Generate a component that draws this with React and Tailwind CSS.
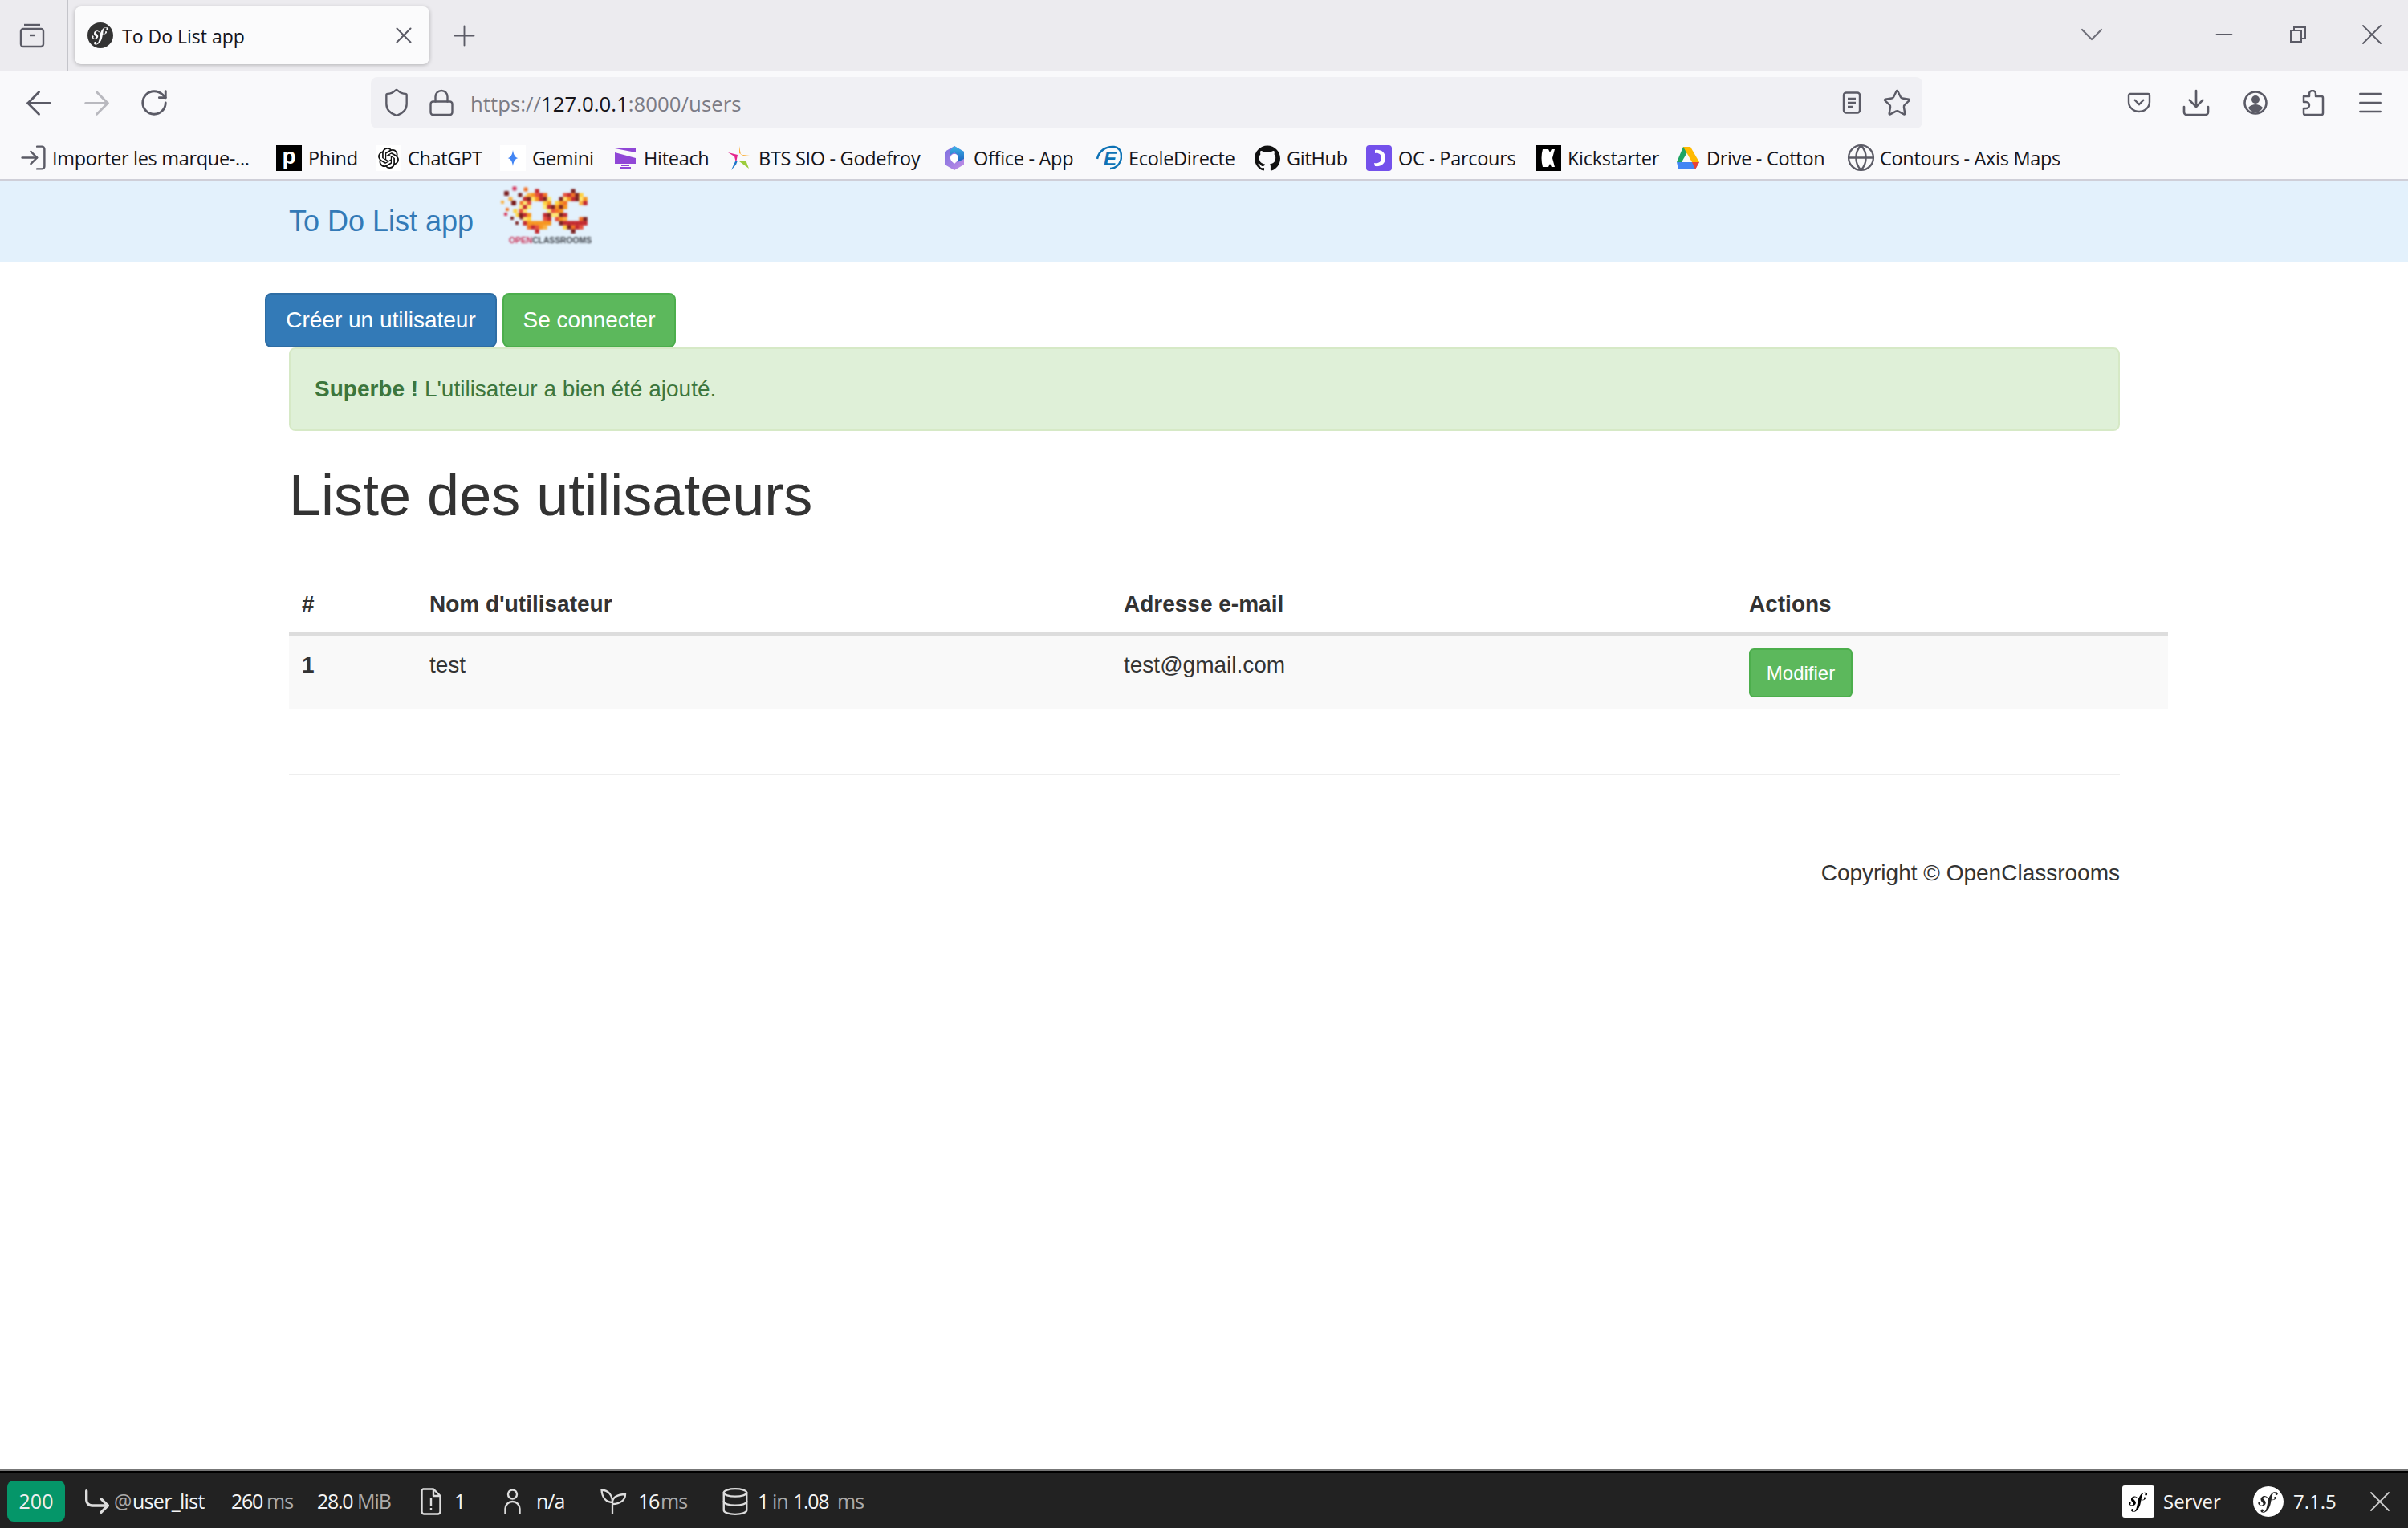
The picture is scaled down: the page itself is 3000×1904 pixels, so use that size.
import React from 'react';
import { SiSymfony, SiGithub, SiOpenai } from 'react-icons/si';
import { LogIn, Globe, X, Plus, ArrowLeft, ArrowRight, RotateCw, Shield, Lock, Star, Download, Menu, ChevronDown, Minus, Database, CornerDownRight } from 'lucide-react';

const GRAY = '#5b5b66';

function Logo() {
  const palette = ['#f7941d', '#ffd23f', '#c2272d', '#fbb040', '#7a1f1f', '#e8503a', '#ffe873', '#f36f21'];
  const cells = [];
  const size = 5;
  const ring = (cx, cy, rx, ry, hx, hy, cut, seed) => {
    for (let i = -6; i <= 6; i++) {
      for (let j = -6; j <= 6; j++) {
        const x = cx + i * size;
        const y = cy + j * size;
        const outer = ((x - cx) / rx) ** 2 + ((y - cy) / ry) ** 2;
        const inner = ((x - cx) / hx) ** 2 + ((y - cy) / hy) ** 2;
        if (outer > 1 || inner < 1) continue;
        if (cut && x > cx + 4 && Math.abs(y - cy) < (x - cx) * 0.55) continue;
        const c = palette[(Math.abs(i * 7 + j * 13 + i * j * 3) + seed) % palette.length];
        cells.push(<rect key={`${seed}-${i}-${j}`} x={x - size / 2} y={y - size / 2} width={size + 0.3} height={size + 0.3} fill={c} />);
      }
    }
  };
  ring(44, 30, 21, 25, 11, 12, false, 1);
  ring(89, 30, 23, 25, 11, 12, true, 3);
  const dots = [[6, 8, 6, '#7a1f1f'], [16, 2, 5, '#d6335a'], [30, 3, 5, '#f36f21'], [23, 10, 5, '#7a1f1f'], [31, 13, 5, '#ffd23f'], [1, 19, 4, '#fbb040'], [11, 15, 5, '#fbb040'], [15, 20, 6, '#7a1f1f'], [25, 20, 5, '#f36f21'], [7, 28, 4, '#f36f21'], [17, 30, 5, '#ffd23f'], [28, 27, 5, '#7a1f1f'], [20, 35, 5, '#ffd23f'], [5, 34, 4, '#d6335a'], [13, 39, 4, '#7a1f1f'], [25, 38, 5, '#7a1f1f'], [19, 45, 4, '#7a1f1f']];
  return (
    <svg viewBox="0 0 113 72" className="ml-[35px] mt-[-15px] h-[72px] w-[113px] overflow-visible blur-[0.9px]">
      {dots.map(([x, y, s, c], i) => <rect key={i} x={x - s / 2} y={y - s / 2} width={s} height={s} rx="1" fill={c} />)}
      {cells}
      <text x="9" y="70" fontSize="10" fontWeight="700" textLength="103" lengthAdjust="spacingAndGlyphs" fontFamily="'Liberation Sans', sans-serif">
        <tspan fill="#c9294f">OPEN</tspan><tspan fill="#3a3f46">CLASSROOMS</tspan>
      </text>
    </svg>
  );
}

function SfSquare() {
  return (
    <span className="relative flex h-[40px] w-[40px] shrink-0 items-center justify-center rounded-[3px] bg-white">
      <span className="absolute h-[30px] w-[30px] rounded-full bg-black" />
      <SiSymfony className="relative h-[36px] w-[36px] text-white" />
    </span>
  );
}

const Ico = ({ children, className = 'w-[30px]' }) => (
  <span className={`flex shrink-0 items-center justify-center [&>svg]:shrink-0 ${className}`}>{children}</span>
);

const bookmarks = [
  { t: 'Importer les marque-...', w: 'w-[241px] mr-[13px]', i: <LogIn size={37} color={GRAY} strokeWidth={1.6} className="shrink-0" /> },
  { t: 'Phind', w: 'w-[59px]', i: <span className="flex h-[32px] w-[32px] justify-center bg-black font-['Liberation_Sans'] text-[28px] font-bold leading-[27px] text-white">p</span> },
  { t: 'ChatGPT', w: 'w-[90px]', i: <span className="flex h-[32px] w-[32px] items-center justify-center bg-white"><SiOpenai size={26} color="#111" /></span> },
  { t: 'Gemini', w: 'w-[74px]', i: <span className="flex h-[32px] w-[32px] items-center justify-center bg-white"><svg viewBox="0 0 24 24" className="h-[22px] w-[22px]"><path d="M12 1c1 7 3 10 7 11-4 1-6 4-7 11-1-7-3-10-7-11 4-1 6-4 7-11z" fill="#4285f4" /></svg></span> },
  { t: 'Hiteach', w: 'w-[78px]', i: <svg viewBox="0 0 32 32" className="h-[32px] w-[32px]"><path d="M4 4l26 0v5L4 4z" fill="#9047d6" /><path d="M4 9l26 7v7H4z" fill="#9047d6" /><rect x="12" y="24" width="10" height="2" fill="#9047d6" /><rect x="10" y="27" width="14" height="2.5" fill="#9047d6" /></svg> },
  { t: 'BTS SIO - Godefroy', w: 'w-[203px]', i: <svg viewBox="0 0 32 32" className="h-[32px] w-[32px]"><path d="M16 1l2 11h11l-8 1-5-3z" fill="#fbb13c" /><path d="M2 9l12 3-2 10-2-8z" fill="#e5258c" /><path d="M6 31l5-11 3-1-2 5z" fill="#1f77c9" /><path d="M16 20l12 9-3-8-2-2z" fill="#9ccc3c" /></svg> },
  { t: 'Office - App', w: 'w-[128px]', i: <svg viewBox="0 0 32 32" className="h-[32px] w-[32px]"><defs><linearGradient id="of1" x1="0" y1="0" x2="1" y2="1"><stop offset="0" stopColor="#7b6fe0" /><stop offset="1" stopColor="#c28ee6" /></linearGradient><linearGradient id="of2" x1="0" y1="0" x2="0" y2="1"><stop offset="0" stopColor="#3fb7e8" /><stop offset="1" stopColor="#1c5fbf" /></linearGradient></defs><path d="M16 1l12 7v16l-12 7-12-7V8z" fill="url(#of1)" /><path d="M16 1l12 7v9l-8 4-2-5 3-3-5-4-5 3v-6z" fill="url(#of2)" /><path d="M16 11c3 0 5 2 5 5s-3 5-5 7c-2-2-5-4-5-7s2-5 5-5z" fill="#fff" /></svg> },
  { t: 'EcoleDirecte', w: 'w-[132px]', i: <svg viewBox="0 0 32 32" className="h-[32px] w-[32px]"><path d="M1 17C3 7 12 1 22 2c7 1 9 6 9 12 0 8-6 15-14 15" fill="none" stroke="#0d72b5" strokeWidth="2.5" /><text x="9" y="25" fontSize="24" fontWeight="700" fontStyle="italic" fill="#0d72b5" fontFamily="'Liberation Sans', sans-serif">E</text></svg> },
  { t: 'GitHub', w: 'w-[74px]', i: <SiGithub size={32} color="#111" /> },
  { t: 'OC - Parcours', w: 'w-[146px]', i: <span className="flex h-[32px] w-[32px] items-center justify-center rounded-[4px] bg-[#7451eb]"><svg viewBox="0 0 32 32" className="h-[32px] w-[32px]"><path d="M11 6c8-1 13 3 13 10s-6 11-13 10l-1-4c5 1 9-1 9-6s-4-7-8-6z" fill="#fff" /></svg></span> },
  { t: 'Kickstarter', w: 'w-[108px]', i: <span className="flex h-[32px] w-[32px] items-center justify-center bg-black"><svg viewBox="0 0 32 32" className="h-[32px] w-[32px]"><path d="M9 5h7l2 4 2-4h4l-3 11 3 11h-4l-2-4-2 4H9c-2-7-2-15 0-22z" fill="#fff" /></svg></span> },
  { t: 'Drive - Cotton', w: 'w-[151px]', i: <svg viewBox="0 0 32 32" className="h-[32px] w-[32px]"><path d="M11 2h9L9 21 3 21z" fill="#1fa463" /><path d="M11 2h9l11 19h-9z" fill="#ffba00" /><path d="M9 21h22l-5 9H5l-2-9z" fill="#4285f4" /><path d="M22 21h9l-5 9z" fill="#ea4335" /></svg> },
  { t: 'Contours - Axis Maps', w: 'w-[228px]', i: <Globe size={37} color={GRAY} strokeWidth={1.5} className="shrink-0" /> },
];

function TabBar() {
  return (
    <div className="flex h-[88px] items-stretch bg-[#ecebef]">
      <div className="flex w-[85px] items-center border-r-2 border-[#c4c4ca] pl-[24px]">
        <svg viewBox="0 0 32 32" className="h-[32px] w-[32px]" fill="none" stroke={GRAY} strokeWidth="2.4"><path d="M6 3h20" /><rect x="2" y="8" width="28" height="22" rx="3" /><path d="M13 16h6" /></svg>
      </div>
      <div className="ml-[8px] mt-[8px] flex h-[72px] w-[442px] items-center rounded-[8px] bg-[#fbfbfc] pl-[16px] shadow-[0_1px_5px_rgba(0,0,0,0.25)]">
        <SiSymfony className="h-[32px] w-[32px] text-[#333]" />
        <span className="ml-[11px] w-[336px] whitespace-nowrap pt-[2px] text-[23px] text-[#15141a]">To Do List app</span>
        <Ico><X size={34} color={GRAY} strokeWidth={1.4} /></Ico>
      </div>
      <div className="ml-[28px] flex items-center"><Ico><Plus size={41} color={GRAY} strokeWidth={1.1} /></Ico></div>
      <div className="ml-auto flex items-center pb-[2px] pr-[30px]">
        <Ico><ChevronDown size={48} color="#70707a" strokeWidth={1.1} /></Ico>
        <Ico className="ml-[135px] w-[30px]"><Minus size={32} color={GRAY} strokeWidth={1.6} /></Ico>
        <Ico className="ml-[62px] w-[30px]"><svg viewBox="0 0 20 20" className="h-[20px] w-[20px]" fill="none" stroke={GRAY} strokeWidth="2"><rect x="1" y="5" width="13" height="14" /><path d="M5 5V1h14v14h-5" /></svg></Ico>
        <Ico className="ml-[62px] w-[30px]"><X size={44} color={GRAY} strokeWidth={1} /></Ico>
      </div>
    </div>
  );
}

function Toolbar() {
  return (
    <div className="flex h-[72px] items-start bg-[#f9f9fb]">
      <div className="flex h-[72px] items-center gap-[42px] pl-[33px] pr-[255px] pt-[8px]">
        <Ico><ArrowLeft size={47} color={GRAY} strokeWidth={1.5} /></Ico>
        <Ico><ArrowRight size={47} color="#b9b9bf" strokeWidth={1.5} /></Ico>
        <Ico><RotateCw size={38} color={GRAY} strokeWidth={1.8} /></Ico>
      </div>
      <div className="mt-[8px] flex h-[64px] w-[1933px] items-center rounded-[8px] bg-[#f0f0f4] pl-[17px] pr-[17px]">
        <Ico><Shield size={38} color={GRAY} strokeWidth={1.5} /></Ico>
        <Ico className="ml-[26px] w-[30px]"><Lock size={36} color={GRAY} strokeWidth={1.6} /></Ico>
        <span className="ml-[21px] flex-1 whitespace-nowrap pt-[2px] text-[25.8px] text-[#7b7b85]">https://<span className="text-[#15141a]">127.0.0.1</span>:8000/users</span>
        <Ico><svg viewBox="0 0 24 28" className="h-[28px] w-[24px]" fill="none" stroke={GRAY} strokeWidth="2.4"><rect x="2" y="1.5" width="20" height="25" rx="3" /><path d="M7 9h10M7 14h10M7 19h6" /></svg></Ico>
        <Ico className="ml-[26px] w-[30px]"><Star size={37} color={GRAY} strokeWidth={1.6} /></Ico>
      </div>
      <div className="flex h-[72px] flex-1 items-center pl-[255px] pt-[8px]">
        <Ico><svg viewBox="0 0 30 26" className="h-[26px] w-[30px]" fill="none" stroke={GRAY} strokeWidth="2.4"><path d="M2 4a2 2 0 0 1 2-2h22a2 2 0 0 1 2 2v8a13 12 0 0 1-26 0z" /><path d="M9 9l6 6 6-6" /></svg></Ico>
        <Ico className="ml-[41px] w-[30px]"><Download size={40} color={GRAY} strokeWidth={1.6} /></Ico>
        <Ico className="ml-[44px] w-[30px]"><svg viewBox="0 0 30 30" className="h-[30px] w-[30px]"><circle cx="15" cy="15" r="13.5" fill="none" stroke={GRAY} strokeWidth="2.6" /><circle cx="15" cy="11" r="5" fill={GRAY} /><path d="M6 21c3-3 6-4 9-4s6 1 9 4c-2 4-6 6-9 6s-7-2-9-6z" fill={GRAY} /></svg></Ico>
        <Ico className="ml-[42px] w-[30px]"><svg viewBox="0 0 30 32" className="h-[32px] w-[30px]" fill="none" stroke={GRAY} strokeWidth="2.5" strokeLinejoin="round"><path d="M3 8h7V5a4 4 0 0 1 8 0v3h7a2 2 0 0 1 2 2v19a2 2 0 0 1-2 2H5a2 2 0 0 1-2-2v-6h3a4 4 0 0 0 0-8H3z" /></svg></Ico>
        <Ico className="ml-[41px] w-[30px]"><Menu size={38} color={GRAY} strokeWidth={1.6} /></Ico>
      </div>
    </div>
  );
}

function Bookmarks() {
  return (
    <div className="flex h-[65px] items-center gap-[25px] border-b-2 border-[#cfcfd8] bg-[#f9f9fb] pl-[25px] pt-[10px]">
      {bookmarks.map((b) => (
        <div key={b.t} className="flex items-center gap-[8px]">
          <span className="flex h-[32px] w-[32px] shrink-0 items-center justify-center">{b.i}</span>
          <span className={`${b.w} whitespace-nowrap pt-[2px] text-[23.5px] tracking-[-0.3px] text-[#15141a]`}>{b.t}</span>
        </div>
      ))}
    </div>
  );
}

function Page() {
  return (
    <div className="flex-1 bg-white font-['Liberation_Sans',Arial,sans-serif] text-[28px] leading-[38px] text-[#333]">
      <nav className="flex h-[102px] items-center bg-[#e3f1fc] pl-[360px]">
        <a className="text-[36px] text-[#337ab7]">To Do List app</a>
        <Logo />
      </nav>
      <div className="pl-[330px] pt-[38px]">
        <div className="flex gap-[7px]">
          <a className="flex h-[68px] w-[289px] items-center justify-center rounded-[8px] border-2 border-[#2e6da4] bg-[#337ab7] text-white">Créer un utilisateur</a>
          <a className="flex h-[68px] w-[216px] items-center justify-center rounded-[8px] border-2 border-[#4cae4c] bg-[#5cb85c] text-white">Se connecter</a>
        </div>
        <div className="ml-[30px] flex h-[104px] w-[2281px] items-center rounded-[8px] border-2 border-[#d6e9c6] bg-[#dff0d8] pl-[30px] text-[#3c763d]">
          <span><strong className="font-bold">Superbe !</strong> L'utilisateur a bien été ajouté.</span>
        </div>
        <h1 className="ml-[30px] mt-[42px] text-[72px] leading-[76px]">Liste des utilisateurs</h1>
        <table className="ml-[30px] mt-[63px] w-[2341px] table-fixed border-collapse text-left">
          <thead>
            <tr className="border-b-[4px] border-[#ddd]">
              <th className="w-[160px] px-[16px] pb-[16px] pt-[16px] font-bold">#</th>
              <th className="w-[865px] px-[15px] pb-[16px] pt-[16px] font-bold">Nom d'utilisateur</th>
              <th className="w-[779px] px-[15px] pb-[16px] pt-[16px] font-bold">Adresse e-mail</th>
              <th className="w-[537px] px-[15px] pb-[16px] pt-[16px] font-bold">Actions</th>
            </tr>
          </thead>
          <tbody>
            <tr className="h-[92px] bg-[#f9f9f9] align-top">
              <td className="px-[16px] pb-[14px] pt-[18px] font-bold">1</td>
              <td className="px-[15px] pb-[14px] pt-[18px]">test</td>
              <td className="px-[15px] pb-[14px] pt-[18px]">test@gmail.com</td>
              <td className="px-[15px] pb-[15px] pt-[16px]">
                <a className="flex h-[61px] w-[129px] items-center justify-center rounded-[6px] border-2 border-[#4cae4c] bg-[#5cb85c] text-[24px] text-white">Modifier</a>
              </td>
            </tr>
          </tbody>
        </table>
        <hr className="ml-[30px] mt-[80px] w-[2281px] border-0 border-t-2 border-[#eee]" />
        <p className="ml-[30px] mt-[103px] w-[2281px] text-right">Copyright © OpenClassrooms</p>
      </div>
    </div>
  );
}

const Muted = ({ children, className = '' }) => <span className={`shrink-0 whitespace-nowrap text-[#aaa] ${className}`}>{children}</span>;
const Val = ({ children, className = '' }) => <span className={`shrink-0 whitespace-nowrap tracking-[-1.3px] ${className}`}>{children}</span>;

function DebugBar() {
  return (
    <div className="flex h-[73px] items-center justify-between border-t-2 border-[#777] bg-[#222] text-[25px] leading-none text-[#f5f5f5] shadow-[inset_0_2px_0_#000]">
      <div className="flex items-center pl-[9px] pt-[4px]">
        <span className="flex h-[51px] w-[72px] shrink-0 items-center justify-center rounded-[8px] bg-[#059669] text-[#eee]">200</span>
        <Ico className="ml-[27px] w-[26px]"><CornerDownRight size={40} color="#ddd" strokeWidth={2} /></Ico>
        <Muted className="ml-[8px] w-[23px]">@</Muted>
        <span className="w-[92px] shrink-0 whitespace-nowrap tracking-[-0.7px]">user_list</span>
        <Val className="ml-[31px] w-[39px]">260</Val>
        <Muted className="ml-[5px] w-[31px] tracking-[-0.8px]">ms</Muted>
        <Val className="ml-[32px] w-[45px]">28.0</Val>
        <Muted className="ml-[5px] w-[40px] tracking-[-1px]">MiB</Muted>
        <Ico className="ml-[39px] w-[26px]"><svg viewBox="0 0 26 34" className="h-[34px] w-[26px]" fill="none" stroke="#ddd" strokeWidth="2.4" strokeLinejoin="round"><path d="M3 1.5h13l8.5 8.5v19.5a3 3 0 0 1-3 3H4.500a3 3 0 0 1-3-3V3z" /><path d="M16 2v8h8M13 13v9M13 25v3" /></svg></Ico>
        <Val className="ml-[16px] w-[11px]">1</Val>
        <Ico className="ml-[51px] w-[21px]"><svg viewBox="0 0 21 32" className="h-[32px] w-[21px]" fill="none" stroke="#ddd" strokeWidth="2.4"><circle cx="10.500" cy="7" r="5.500" /><path d="M1.500 32v-7a9 9 0 0 1 18 0v7" /></svg></Ico>
        <span className="ml-[19px] w-[36px] shrink-0 whitespace-nowrap tracking-[-1px]">n/a</span>
        <Ico className="ml-[44px] w-[33px]"><svg viewBox="0 0 33 32" className="h-[32px] w-[33px]" fill="none" stroke="#ddd" strokeWidth="2.300"><path d="M15 32V17C7 17 2 11 1.500 1.500 10 2 15 8 15 17M15 17c0-6 6-10 16-10 0 7-6 12-16 12" /></svg></Ico>
        <Val className="ml-[14px] w-[25px]">16</Val>
        <Muted className="ml-[3px] w-[30px] tracking-[-0.8px]">ms</Muted>
        <Ico className="ml-[48px] w-[29px]"><Database size={38} color="#ddd" strokeWidth={1.5} /></Ico>
        <Val className="ml-[14px] w-[7px]">1</Val>
        <Muted className="ml-[11px] w-[18px] tracking-[-1px]">in</Muted>
        <Val className="ml-[8px] w-[47px]">1.08</Val>
        <Muted className="ml-[8px] w-[30px] tracking-[-0.8px]">ms</Muted>
      </div>
      <div className="flex items-center pr-[24px] pt-[4px] text-[24px]">
        <SfSquare />
        <span className="ml-[11px] w-[71px] whitespace-nowrap">Server</span>
        <SiSymfony className="ml-[41px] h-[38px] w-[38px] text-white" />
        <span className="ml-[12px] w-[51px] whitespace-nowrap">7.1.5</span>
        <Ico className="ml-[46px] w-[22px]"><X size={44} color="#ccc" strokeWidth={1} /></Ico>
      </div>
    </div>
  );
}

export default function App() {
  return (
    <div className="flex h-[1904px] w-[3000px] flex-col overflow-hidden font-['Open_Sans',sans-serif]">
      <TabBar />
      <Toolbar />
      <Bookmarks />
      <Page />
      <DebugBar />
    </div>
  );
}
